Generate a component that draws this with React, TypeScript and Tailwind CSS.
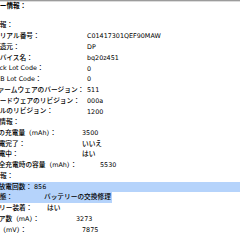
type Row = {
  label: string;
  value?: string;
  ml: string; // where the full label starts (the pane cuts it on the left)
  w: string; // label box: distance from label start to value
  hl?: "full" | "text";
};

const rows: Row[] = [
  { label: "モデル情報：", ml: "-ml-[27px]", w: "w-[44px]" },
  { label: "シリアル番号：", value: "C01417301QEF90MAW", ml: "-ml-[7px]", w: "w-[94px]" },
  { label: "製造元：", value: "DP", ml: "-ml-[7px]", w: "w-[94px]" },
  { label: "デバイス名：", value: "bq20z451", ml: "-ml-[7px]", w: "w-[94px]" },
  { label: "Pack Lot Code：", value: "0", ml: "-ml-[8px]", w: "w-[95px]" },
  { label: "PCB Lot Code：", value: "0", ml: "-ml-[8px]", w: "w-[95px]" },
  { label: "ファームウェアのバージョン：", value: "511", ml: "-ml-[9px]", w: "w-[96px]" },
  { label: "ハードウェアのリビジョン：", value: "000a", ml: "-ml-[7px]", w: "w-[94px]" },
  { label: "セルのリビジョン：", value: "1200", ml: "-ml-[7px]", w: "w-[94px]" },
  { label: "充電情報：", ml: "-ml-[14px]", w: "w-[44px]" },
  { label: "残りの充電量（mAh）：", value: "3500", ml: "-ml-[15px]", w: "w-[97px]" },
  { label: "充電完了：", value: "いいえ", ml: "-ml-[8px]", w: "w-[90px]" },
  { label: "充電中：", value: "はい", ml: "-ml-[8px]", w: "w-[90px]" },
  { label: "完全充電時の容量（mAh）：", value: "5530", ml: "-ml-[8px]", w: "w-[108px]" },
  { label: "状態情報：", ml: "-ml-[20px]", w: "w-[44px]" },
  { label: "充放電回数：", value: "856", ml: "-ml-[8px]", w: "w-[42px]", hl: "full" },
  { label: "状態：", value: "バッテリーの交換修理", ml: "-ml-[7px]", w: "w-[51px]", hl: "text" },
  { label: "バッテリー装着：", value: "はい", ml: "-ml-[21px]", w: "w-[68px]" },
  { label: "アンペア数（mA）：", value: "3273", ml: "-ml-[21px]", w: "w-[97px]" },
  { label: "電圧（mV）：", value: "7875", ml: "-ml-[14px]", w: "w-[96px]" },
];

const CJK = /([\u3000-\u30ff\u4e00-\u9fff\uff00-\uffef]+)/;

// Japanese runs are set a little larger than the Latin ones, as in the screenshot
function Text({ s }: { s: string }) {
  const parts = s.split(CJK).filter(Boolean);
  return (
    <>
      {parts.map((p, i) =>
        /[\u3000-\u30ff\u4e00-\u9fff\uff00-\uffef]/.test(p) ? (
          <span key={i} className="text-[6.7px]">{p}</span>
        ) : (
          <span key={i}>{p}</span>
        )
      )}
    </>
  );
}

function InfoRow({ row }: { row: Row }) {
  return (
    <div className={`flex h-[10.75px] items-center whitespace-nowrap ${row.hl === "full" ? "bg-[#b5d3fb]" : ""}`}>
      <div className={`flex items-center h-full ${row.ml} ${row.hl === "text" ? "bg-[#b5d3fb]" : ""}`}>
        <span className={`${row.w} shrink-0`}>
          <Text s={row.label} />
        </span>
        {row.value && (
          <span className="pr-[1px]">
            <Text s={row.value} />
          </span>
        )}
      </div>
    </div>
  );
}

export default function App() {
  return (
    <div
      className="w-[240px] h-[240px] overflow-hidden bg-white text-[6.4px] leading-none font-medium text-black"
      style={{ fontFamily: '"DejaVu Sans", "Noto Sans CJK JP", sans-serif' }}
    >
      <div className="h-[1px] bg-[#9c9c9c]" />
      <div className="h-[1px] bg-[#dcdcdc]" />
      <div className="flex h-[8px] items-center whitespace-nowrap font-bold -ml-[27px]">
        <Text s="バッテリー情報：" />
      </div>
      <div className="h-[10.4px]" />
      {rows.map((row) => (
        <InfoRow key={row.label} row={row} />
      ))}
    </div>
  );
}
